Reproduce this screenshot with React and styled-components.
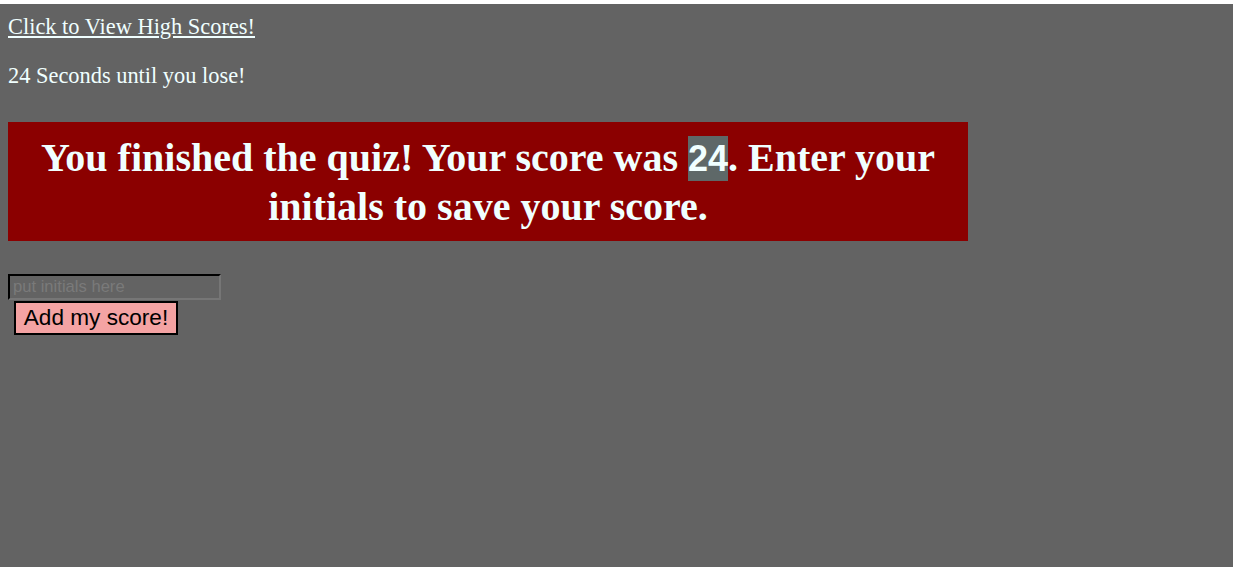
import React from "react";
import styled, { createGlobalStyle } from "styled-components";

const Global = createGlobalStyle`
  html { background: #ffffff; }
  body {
    margin: 4px 0 0;
    background: #636363;
    min-height: 563px;
    font-family: "Liberation Serif", "Times New Roman", serif;
    color: #f0ffff;
  }
`;

const Page = styled.div`
  padding: 11px 8px 0;
  display: flex;
  flex-direction: column;
  align-items: flex-start;
`;

const ScoresLink = styled.a`
  font-size: 22.4px;
  line-height: 24px;
  color: #f0ffff;
  text-decoration: underline;
  cursor: pointer;
`;

const Timer = styled.p`
  margin: 25px 0 0;
  font-size: 22.4px;
  line-height: 24px;
`;

const Banner = styled.h1`
  margin: 34px 0 0;
  width: 960px;
  box-sizing: border-box;
  padding: 12px 20px 10px;
  background: #8b0000;
  color: #f0ffff;
  font-size: 40px;
  line-height: 48px;
  font-weight: bold;
  text-align: center;
`;

const Score = styled.span`
  background: #5e6868;
  font-family: "Liberation Sans", Arial, sans-serif;
  font-size: 36px;
  padding: 2px 0;
`;

const Form = styled.form`
  margin-top: 33px;
  display: flex;
  flex-direction: column;
  align-items: flex-start;
`;

const Initials = styled.input`
  width: 213px;
  height: 26px;
  box-sizing: border-box;
  background: transparent;
  border: 2px inset #3a3a3a;
  border-right-color: #767676;
  border-bottom-color: #767676;
  padding: 1px 3px;
  font-family: "Liberation Sans", Arial, sans-serif;
  font-size: 16.6px;
  color: #222;
  &::placeholder { color: #7a7a7a; }
`;

const AddButton = styled.button`
  margin: 1px 0 0 6px;
  height: 34px;
  width: 164px;
  padding: 0;
  background: #f4a3a3;
  border: 2px solid #000;
  color: #000;
  font-family: "Liberation Sans", Arial, sans-serif;
  font-size: 22.6px;
  cursor: pointer;
`;

export default function App() {
  return (
    <>
      <Global />
      <Page>
        <ScoresLink>Click to View High Scores!</ScoresLink>
        <Timer>24 Seconds until you lose!</Timer>
        <Banner>
          You finished the quiz! Your score was <Score>24</Score>. Enter your initials to save your score.
        </Banner>
        <Form onSubmit={(e) => e.preventDefault()}>
          <Initials placeholder="put initials here" />
          <AddButton type="submit">Add my score!</AddButton>
        </Form>
      </Page>
    </>
  );
}
